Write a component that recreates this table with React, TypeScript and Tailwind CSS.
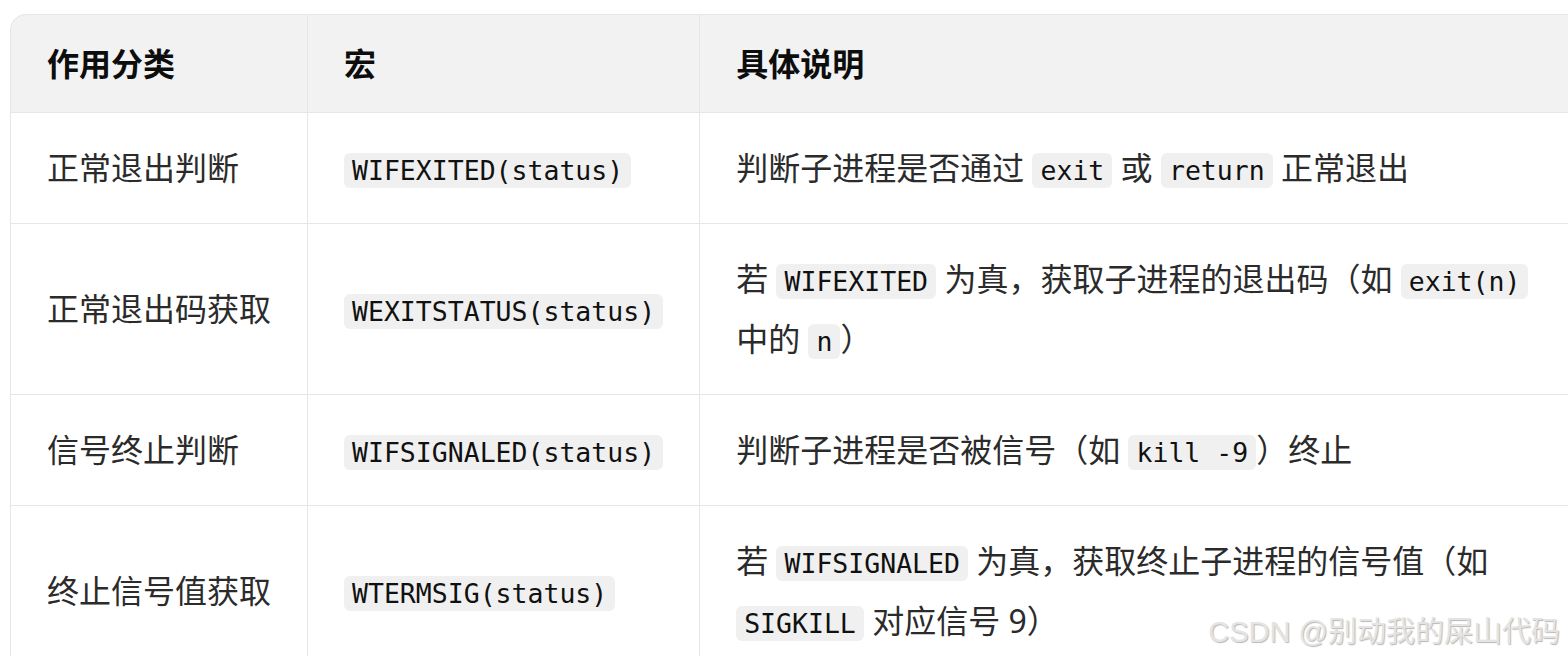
import React from 'react';

const Code: React.FC<{ children: React.ReactNode }> = ({ children }) => (
  <code className="whitespace-nowrap rounded-md bg-[#f0f0f0] px-2 py-[2px] font-['DejaVu_Sans_Mono',monospace] text-[26.5px] leading-none text-[#111]">
    {children}
  </code>
);

const rows: { kind: string; macro: string; desc: React.ReactNode }[] = [
  {
    kind: '正常退出判断',
    macro: 'WIFEXITED(status)',
    desc: (
      <>
        判断子进程是否通过 <Code>exit</Code> 或 <Code>return</Code> 正常退出
      </>
    ),
  },
  {
    kind: '正常退出码获取',
    macro: 'WEXITSTATUS(status)',
    desc: (
      <>
        若 <Code>WIFEXITED</Code> 为真，获取子进程的退出码（如 <Code>exit(n)</Code> 中的 <Code>n</Code>）
      </>
    ),
  },
  {
    kind: '信号终止判断',
    macro: 'WIFSIGNALED(status)',
    desc: (
      <>
        判断子进程是否被信号（如 <Code>kill -9</Code>）终止
      </>
    ),
  },
  {
    kind: '终止信号值获取',
    macro: 'WTERMSIG(status)',
    desc: (
      <>
        若 <Code>WIFSIGNALED</Code> 为真，获取终止子进程的信号值（如 <Code>SIGKILL</Code> 对应信号 9）
      </>
    ),
  },
];

export default function App() {
  return (
    <div className="relative h-[656px] w-[1568px] overflow-hidden bg-white font-['Noto_Sans','Noto_Sans_CJK_SC',sans-serif] text-[32px] text-[#2b2b2b]">
      <div className="ml-[10px] mt-[14px] w-[1700px]">
        <table className="border-separate border-spacing-0 text-left">
          <thead>
            <tr className="bg-[#f2f2f2]">
              <th className="w-[298px] rounded-tl-2xl border-l border-t border-r border-b border-[#e6e6e6] px-[36px] py-[18px] align-middle text-[32px] leading-[61px] font-bold text-[#0d0d0d]">
                作用分类
              </th>
              <th className="w-[391px] border-t border-r border-b border-[#e6e6e6] px-[36px] py-[18px] align-middle leading-[61px] font-bold text-[#0d0d0d]">
                宏
              </th>
              <th className="w-[897px] border-t border-b border-[#e6e6e6] px-[36px] py-[18px] align-middle leading-[61px] font-bold text-[#0d0d0d]">
                具体说明
              </th>
            </tr>
          </thead>
          <tbody>
            {rows.map((r) => (
              <tr key={r.macro}>
                <td className="border-l border-r border-b border-[#e6e6e6] px-[36px] py-[25px] align-middle leading-[60px]">
                  {r.kind}
                </td>
                <td className="border-r border-b border-[#e6e6e6] px-[36px] py-[25px] align-middle leading-[60px]">
                  <Code>{r.macro}</Code>
                </td>
                <td className="border-b border-[#e6e6e6] px-[36px] py-[25px] align-middle leading-[60px]">
                  {r.desc}
                </td>
              </tr>
            ))}
          </tbody>
        </table>
      </div>
      <div className="absolute bottom-[9px] right-[8px] font-['Liberation_Sans','Noto_Sans_CJK_SC',sans-serif] text-[29px] leading-none text-[#e4e4e4] [text-shadow:1px_1px_1px_#b8b8b8]">
        CSDN @别动我的屎山代码
      </div>
    </div>
  );
}
